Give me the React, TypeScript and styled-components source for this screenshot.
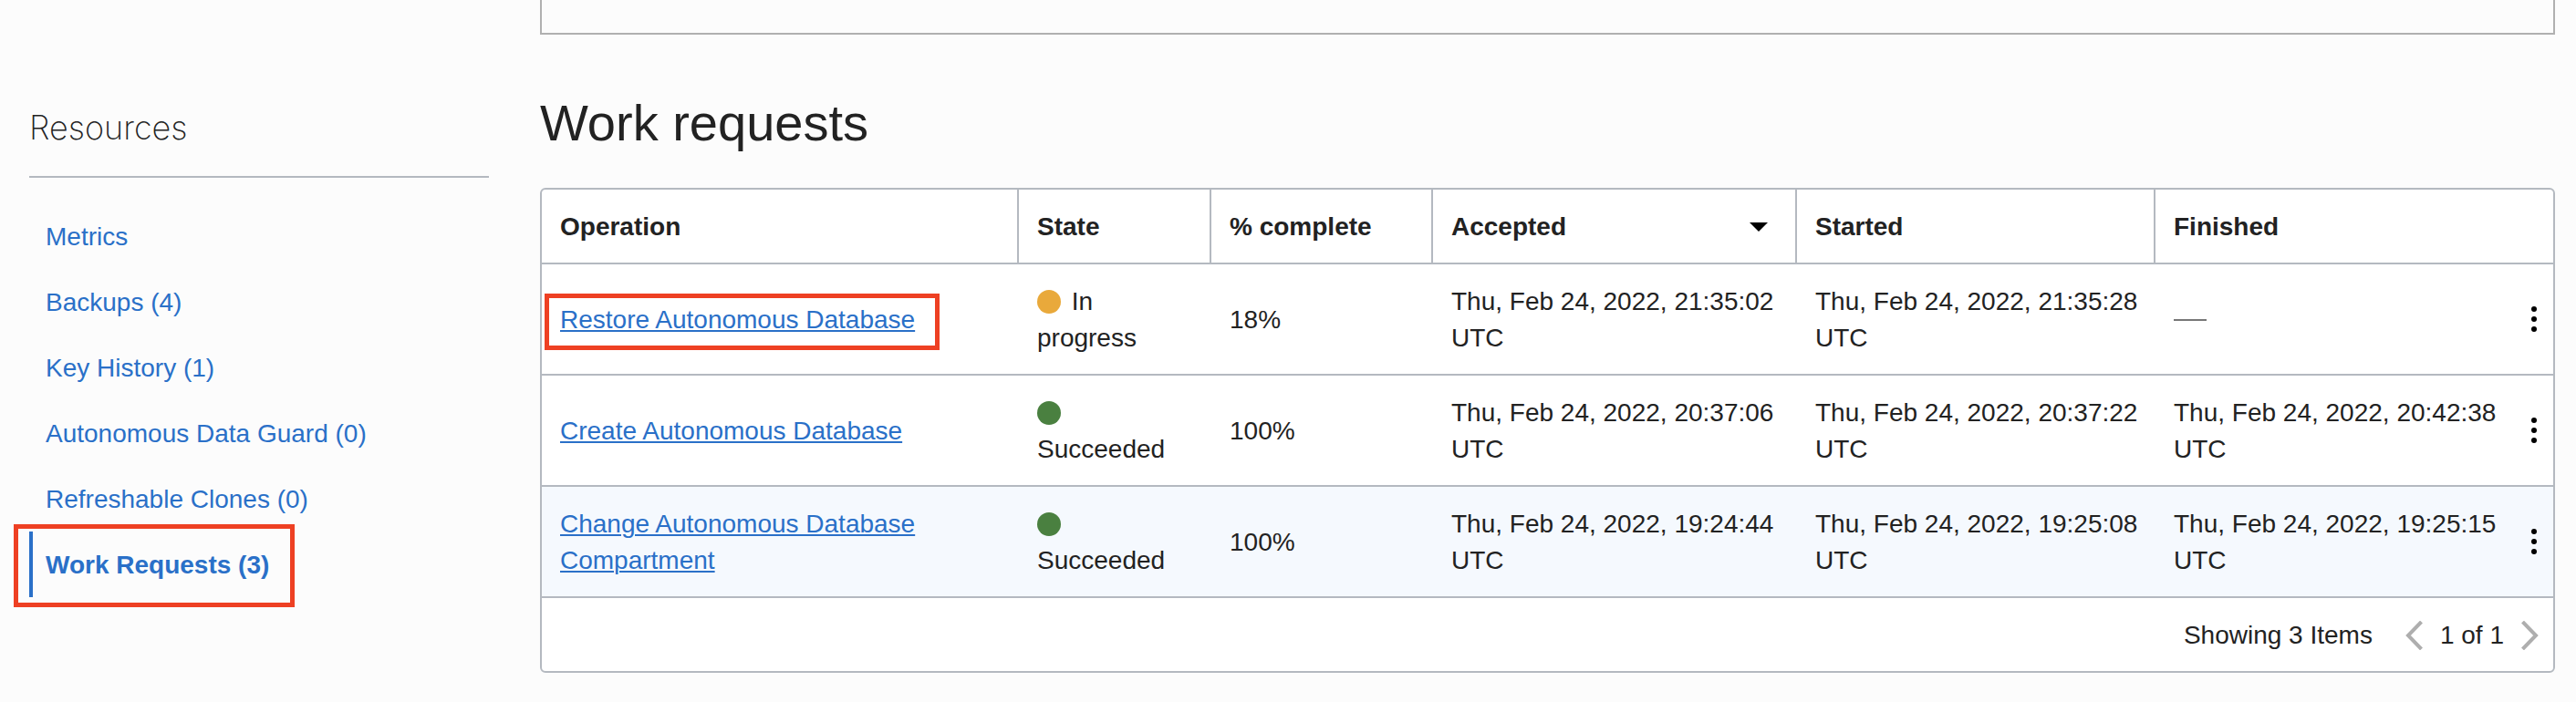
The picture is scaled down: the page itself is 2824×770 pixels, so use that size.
import React from "react";
import styled, { createGlobalStyle } from "styled-components";

const line = "#b4b9c0";
const link = "#2a70c8";
const ink = "#222222";
const mark = "#ee4023";

const GlobalStyle = createGlobalStyle`
  * { box-sizing: border-box; }
  body {
    margin: 0;
    background: #fcfcfc;
    color: ${ink};
    font: 28px/40px "Liberation Sans", Arial, sans-serif;
  }
`;

const Page = styled.div`
  display: flex;
  gap: 56px;
  min-height: 100vh;
  padding: 0 23px 32px 32px;
`;

const Sidebar = styled.aside`
  flex: 0 0 504px;
  padding-top: 116px;
`;

const SidebarTitle = styled.h2`
  margin: 0;
  padding-bottom: 29px;
  border-bottom: 2px solid ${line};
  font-family: Inter, sans-serif;
  font-size: 36px;
  line-height: 48px;
  font-weight: 200;
`;

const NavList = styled.ul`
  list-style: none;
  margin: 28px 0 0;
  padding: 0;
`;

const NavItem = styled.li`
  position: relative;
  width: fit-content;
`;

const NavLink = styled.a<{ $active?: boolean }>`
  display: block;
  padding: 17px 14px 15px;
  border-left: 4px solid ${(p) => (p.$active ? link : "transparent")};
  color: ${link};
  font-weight: ${(p) => (p.$active ? 700 : 400)};
  text-decoration: none;
`;

const Callout = styled.span<{ $inset: string }>`
  position: absolute;
  inset: ${(p) => p.$inset};
  border: 5px solid ${mark};
  pointer-events: none;
`;

const Main = styled.main`
  flex: 1;
  min-width: 0;
`;

const PreviousPanel = styled.section`
  height: 38px;
  border: 2px solid #b0b0b0;
  border-top: 0;
`;

const Title = styled.h1`
  margin: 65px 0 39px;
  font-size: 56px;
  line-height: 64px;
  font-weight: 400;
`;

const TableCard = styled.section`
  border: 2px solid ${line};
  border-radius: 6px;
  background: #ffffff;
  overflow: hidden;
`;

const Table = styled.table`
  width: 100%;
  table-layout: fixed;
  border-collapse: separate;
  border-spacing: 0;
`;

const Column = styled.col<{ $width: number }>`
  width: ${(p) => p.$width}px;
`;

const HeadCell = styled.th<{ $last?: boolean }>`
  height: 82px;
  padding: 2px 16px 0 20px;
  border-right: ${(p) => (p.$last ? 0 : 2)}px solid ${line};
  border-bottom: 2px solid ${line};
  text-align: left;
  font-weight: 700;
`;

const SortButton = styled.button`
  display: flex;
  align-items: center;
  justify-content: space-between;
  width: 100%;
  padding: 0 14px 0 0;
  border: 0;
  background: none;
  color: inherit;
  font: inherit;
`;

const Row = styled.tr<{ $shaded?: boolean }>`
  background: ${(p) => (p.$shaded ? "#f5f9fe" : "#ffffff")};
`;

const Cell = styled.td`
  height: 122px;
  padding: 2px 16px 0 20px;
  border-bottom: 2px solid ${line};
  vertical-align: middle;
`;

const ActionCell = styled(Cell)`
  padding: 0 12px 0 0;
`;

const Operation = styled.span`
  position: relative;
  display: inline-block;
  vertical-align: top;
`;

const OperationLink = styled.a`
  color: ${link};
  text-decoration: underline;
  text-decoration-thickness: 2px;
  text-underline-offset: 2px;
`;

const StatusDot = styled.span<{ $color: string }>`
  display: inline-block;
  width: 26px;
  height: 26px;
  margin-right: 4px;
  border-radius: 50%;
  background: ${(p) => p.$color};
  vertical-align: -4px;
`;

const Empty = styled.span`
  display: block;
  width: 36px;
  height: 2px;
  background: #777777;
`;

const IconButton = styled.button`
  display: flex;
  align-items: center;
  padding: 0;
  border: 0;
  background: none;
`;

const MenuButton = styled(IconButton)`
  margin-left: auto;
`;

const Footer = styled.footer`
  display: flex;
  align-items: center;
  justify-content: flex-end;
  height: 80px;
  padding: 2px 16px 0 0;
`;

const Pager = styled.div`
  display: flex;
  align-items: center;
  gap: 18px;
  margin-left: 36px;
`;

const resources = [
  "Metrics",
  "Backups (4)",
  "Key History (1)",
  "Autonomous Data Guard (0)",
  "Refreshable Clones (0)",
  "Work Requests (3)",
];

const columnWidths = [523, 211, 243, 399, 393, 392, 44];

interface WorkRequest {
  operation: string;
  state: string;
  color: string;
  complete: string;
  accepted: string;
  started: string;
  finished?: string;
  marked?: boolean;
  shaded?: boolean;
}

const requests: WorkRequest[] = [
  {
    operation: "Restore Autonomous Database",
    state: "In progress",
    color: "#e9a93b",
    complete: "18%",
    accepted: "Thu, Feb 24, 2022, 21:35:02 UTC",
    started: "Thu, Feb 24, 2022, 21:35:28 UTC",
    marked: true,
  },
  {
    operation: "Create Autonomous Database",
    state: "Succeeded",
    color: "#4a8040",
    complete: "100%",
    accepted: "Thu, Feb 24, 2022, 20:37:06 UTC",
    started: "Thu, Feb 24, 2022, 20:37:22 UTC",
    finished: "Thu, Feb 24, 2022, 20:42:38 UTC",
  },
  {
    operation: "Change Autonomous Database Compartment",
    state: "Succeeded",
    color: "#4a8040",
    complete: "100%",
    accepted: "Thu, Feb 24, 2022, 19:24:44 UTC",
    started: "Thu, Feb 24, 2022, 19:25:08 UTC",
    finished: "Thu, Feb 24, 2022, 19:25:15 UTC",
    shaded: true,
  },
];

function Chevron({ points }: { points: string }) {
  return (
    <svg width="20" height="32" viewBox="0 0 20 32" fill="none" stroke="#aeaeae" strokeWidth="4" aria-hidden="true">
      <polyline points={points} />
    </svg>
  );
}

export default function App() {
  return (
    <>
      <GlobalStyle />
      <Page>
        <Sidebar>
          <SidebarTitle>Resources</SidebarTitle>
          <nav aria-label="Resources">
            <NavList>
              {resources.map((label) => {
                const active = label.startsWith("Work");
                return (
                  <NavItem key={label}>
                    <NavLink href="#" $active={active} aria-current={active ? "page" : undefined}>
                      {label}
                    </NavLink>
                    {active && <Callout $inset="-8px -14px -11px -17px" />}
                  </NavItem>
                );
              })}
            </NavList>
          </nav>
        </Sidebar>
        <Main>
          <PreviousPanel />
          <Title>Work requests</Title>
          <TableCard>
            <Table>
              <colgroup>
                {columnWidths.map((width, i) => (
                  <Column key={i} $width={width} />
                ))}
              </colgroup>
              <thead>
                <tr>
                  <HeadCell scope="col">Operation</HeadCell>
                  <HeadCell scope="col">State</HeadCell>
                  <HeadCell scope="col">% complete</HeadCell>
                  <HeadCell scope="col" aria-sort="descending">
                    <SortButton type="button">
                      Accepted
                      <svg width="20" height="10" viewBox="0 0 20 10" aria-hidden="true">
                        <path d="M0 0h20L10 10z" fill="#000" />
                      </svg>
                    </SortButton>
                  </HeadCell>
                  <HeadCell scope="col">Started</HeadCell>
                  <HeadCell scope="col" colSpan={2} $last>
                    Finished
                  </HeadCell>
                </tr>
              </thead>
              <tbody>
                {requests.map((r) => (
                  <Row key={r.operation} $shaded={r.shaded}>
                    <Cell>
                      <Operation>
                        <OperationLink href="#">{r.operation}</OperationLink>
                        {r.marked && <Callout $inset="-9px -27px -13px -17px" />}
                      </Operation>
                    </Cell>
                    <Cell>
                      <StatusDot $color={r.color} /> {r.state}
                    </Cell>
                    <Cell>{r.complete}</Cell>
                    <Cell>{r.accepted}</Cell>
                    <Cell>{r.started}</Cell>
                    <Cell>{r.finished ?? <Empty />}</Cell>
                    <ActionCell>
                      <MenuButton type="button" aria-label={`Actions for ${r.operation}`}>
                        <svg width="16" height="28" viewBox="0 0 16 28" aria-hidden="true">
                          <circle cx="7" cy="3" r="3" />
                          <circle cx="7" cy="14" r="3" />
                          <circle cx="7" cy="25" r="3" />
                        </svg>
                      </MenuButton>
                    </ActionCell>
                  </Row>
                ))}
              </tbody>
            </Table>
            <Footer>
              <span>Showing 3 Items</span>
              <Pager>
                <IconButton type="button" aria-label="Previous page">
                  <Chevron points="17.5,1 3,16 17.5,31" />
                </IconButton>
                <span>1 of 1</span>
                <IconButton type="button" aria-label="Next page">
                  <Chevron points="2.5,1 17,16 2.5,31" />
                </IconButton>
              </Pager>
            </Footer>
          </TableCard>
        </Main>
      </Page>
    </>
  );
}
